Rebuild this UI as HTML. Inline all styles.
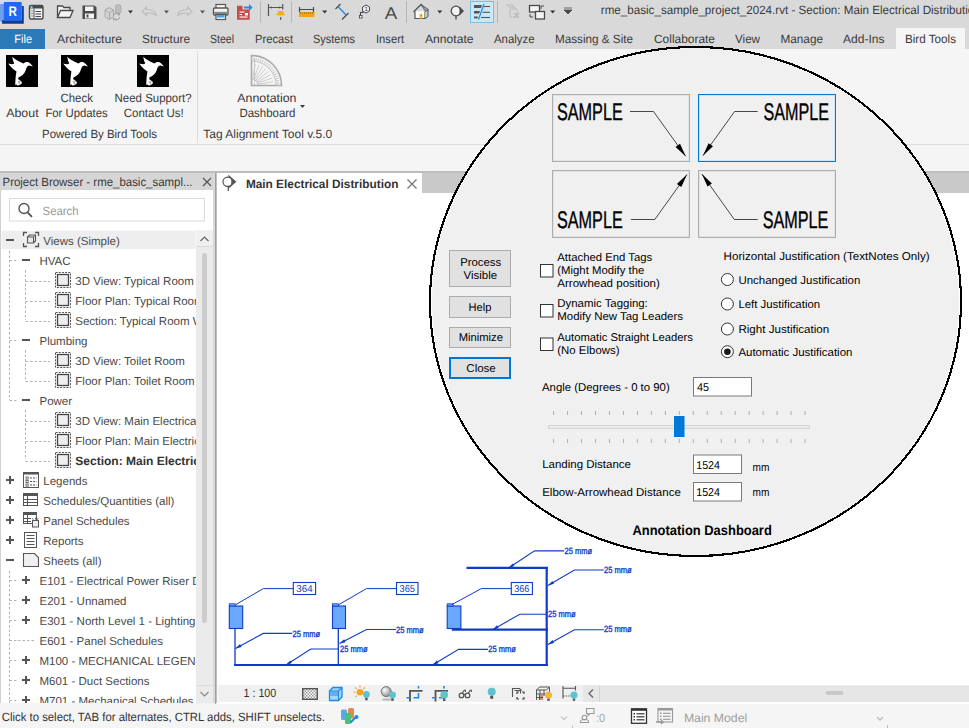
<!DOCTYPE html>
<html><head><meta charset="utf-8"><style>
html,body{margin:0;padding:0;width:969px;height:728px;overflow:hidden;background:#f5f5f5}
svg{display:block;font-family:"Liberation Sans", sans-serif}
</style></head><body>
<svg width="969" height="728" viewBox="0 0 969 728" text-rendering="geometricPrecision">
<rect x="0" y="0" width="969" height="728" fill="#f5f5f5" />
<rect x="0" y="0" width="969" height="49" fill="#d9d9d9" />
<rect x="0" y="29" width="45" height="20" fill="#2b79b9" />
<text x="14.3" y="43" font-size="12" fill="#ffffff" font-weight="normal" text-anchor="start" textLength="17.8" lengthAdjust="spacingAndGlyphs" >File</text>
<rect x="896" y="28" width="69" height="21" fill="#f5f5f5" />
<text x="57" y="43" font-size="12" fill="#3a3a3a" textLength="65" lengthAdjust="spacingAndGlyphs">Architecture</text>
<text x="142" y="43" font-size="12" fill="#3a3a3a" textLength="48" lengthAdjust="spacingAndGlyphs">Structure</text>
<text x="210" y="43" font-size="12" fill="#3a3a3a" textLength="24" lengthAdjust="spacingAndGlyphs">Steel</text>
<text x="255" y="43" font-size="12" fill="#3a3a3a" textLength="38" lengthAdjust="spacingAndGlyphs">Precast</text>
<text x="313" y="43" font-size="12" fill="#3a3a3a" textLength="42" lengthAdjust="spacingAndGlyphs">Systems</text>
<text x="376" y="43" font-size="12" fill="#3a3a3a" textLength="28" lengthAdjust="spacingAndGlyphs">Insert</text>
<text x="425" y="43" font-size="12" fill="#3a3a3a" textLength="48.5" lengthAdjust="spacingAndGlyphs">Annotate</text>
<text x="494" y="43" font-size="12" fill="#3a3a3a" textLength="40.5" lengthAdjust="spacingAndGlyphs">Analyze</text>
<text x="555" y="43" font-size="12" fill="#3a3a3a" textLength="78" lengthAdjust="spacingAndGlyphs">Massing &amp; Site</text>
<text x="654" y="43" font-size="12" fill="#3a3a3a" textLength="61" lengthAdjust="spacingAndGlyphs">Collaborate</text>
<text x="735" y="43" font-size="12" fill="#3a3a3a" textLength="25" lengthAdjust="spacingAndGlyphs">View</text>
<text x="780.5" y="43" font-size="12" fill="#3a3a3a" textLength="42.5" lengthAdjust="spacingAndGlyphs">Manage</text>
<text x="843" y="43" font-size="12" fill="#3a3a3a" textLength="41.5" lengthAdjust="spacingAndGlyphs">Add-Ins</text>
<text x="905" y="43" font-size="12" fill="#3a3a3a" textLength="51" lengthAdjust="spacingAndGlyphs">Bird Tools</text>
<line x1="0" y1="144.5" x2="969" y2="144.5" stroke="#dcdcdc" stroke-width="1" />
<line x1="197.5" y1="51" x2="197.5" y2="143" stroke="#dedede" stroke-width="1" />
<text x="6.2" y="116.7" font-size="12" fill="#3a3a3a" font-weight="normal" text-anchor="start" textLength="32.4" lengthAdjust="spacingAndGlyphs" >About</text>
<text x="60.5" y="102" font-size="12" fill="#3a3a3a" font-weight="normal" text-anchor="start" textLength="32.4" lengthAdjust="spacingAndGlyphs" >Check</text>
<text x="45.4" y="116.7" font-size="12" fill="#3a3a3a" font-weight="normal" text-anchor="start" textLength="62.3" lengthAdjust="spacingAndGlyphs" >For Updates</text>
<text x="114.6" y="102" font-size="12" fill="#3a3a3a" font-weight="normal" text-anchor="start" textLength="77" lengthAdjust="spacingAndGlyphs" >Need Support?</text>
<text x="123.8" y="116.7" font-size="12" fill="#3a3a3a" font-weight="normal" text-anchor="start" textLength="60" lengthAdjust="spacingAndGlyphs" >Contact Us!</text>
<text x="42" y="138.2" font-size="12" fill="#3a3a3a" font-weight="normal" text-anchor="start" textLength="115" lengthAdjust="spacingAndGlyphs" >Powered By Bird Tools</text>
<text x="237.3" y="102" font-size="12" fill="#3a3a3a" font-weight="normal" text-anchor="start" textLength="59.2" lengthAdjust="spacingAndGlyphs" >Annotation</text>
<text x="239.4" y="116.7" font-size="12" fill="#3a3a3a" font-weight="normal" text-anchor="start" textLength="56.1" lengthAdjust="spacingAndGlyphs" >Dashboard</text>
<path d="M300,105 h5 l-2.5,3 z" fill="#3a3a3a" />
<text x="203.3" y="138.2" font-size="12" fill="#3a3a3a" font-weight="normal" text-anchor="start" textLength="129" lengthAdjust="spacingAndGlyphs" >Tag Alignment Tool v.5.0</text>
<text x="600.8" y="13.6" font-size="12" fill="#3a3a3a" font-weight="normal" text-anchor="start" textLength="380" lengthAdjust="spacingAndGlyphs" >rme_basic_sample_project_2024.rvt - Section: Main Electrical Distribution</text>
<rect x="6" y="55" width="32" height="32" fill="#000" />
<g transform="translate(6,55)"><path d="M6.2,1.7 C8,3.5 12,6 17.5,8.5 C19,6.5 22,6.3 24,8.3 L27,11.6 L23.2,10.6 C21,11 20.2,13 19.6,15.5 C18.6,19 15.5,21 12.6,22.2 L11.8,26 L10.4,30.2 L9.2,29.5 L9.6,22.6 C9.9,19.5 10.3,17.8 10.5,16.5 C7,14.2 4,11.2 2.2,8.4 C4.5,9.2 6.8,9.6 8.2,8.6 C7.2,6.5 6.5,4.2 6.2,1.7 Z" fill="#fff"/><path d="M11,24.5 c2,0 4,1.5 4.6,3.5 c-1,1.5 -3,2.2 -4.6,2" fill="#fff" stroke="#fff" stroke-width="0.8"/><path d="M12,26 l1.5,3 M14,25.8 l-0.5,2.5" stroke="#666" stroke-width="0.6"/></g>
<rect x="61" y="55" width="32" height="32" fill="#000" />
<g transform="translate(61,55)"><path d="M6.2,1.7 C8,3.5 12,6 17.5,8.5 C19,6.5 22,6.3 24,8.3 L27,11.6 L23.2,10.6 C21,11 20.2,13 19.6,15.5 C18.6,19 15.5,21 12.6,22.2 L11.8,26 L10.4,30.2 L9.2,29.5 L9.6,22.6 C9.9,19.5 10.3,17.8 10.5,16.5 C7,14.2 4,11.2 2.2,8.4 C4.5,9.2 6.8,9.6 8.2,8.6 C7.2,6.5 6.5,4.2 6.2,1.7 Z" fill="#fff"/><path d="M11,24.5 c2,0 4,1.5 4.6,3.5 c-1,1.5 -3,2.2 -4.6,2" fill="#fff" stroke="#fff" stroke-width="0.8"/><path d="M12,26 l1.5,3 M14,25.8 l-0.5,2.5" stroke="#666" stroke-width="0.6"/></g>
<rect x="137" y="55" width="32" height="32" fill="#000" />
<g transform="translate(137,55)"><path d="M6.2,1.7 C8,3.5 12,6 17.5,8.5 C19,6.5 22,6.3 24,8.3 L27,11.6 L23.2,10.6 C21,11 20.2,13 19.6,15.5 C18.6,19 15.5,21 12.6,22.2 L11.8,26 L10.4,30.2 L9.2,29.5 L9.6,22.6 C9.9,19.5 10.3,17.8 10.5,16.5 C7,14.2 4,11.2 2.2,8.4 C4.5,9.2 6.8,9.6 8.2,8.6 C7.2,6.5 6.5,4.2 6.2,1.7 Z" fill="#fff"/><path d="M11,24.5 c2,0 4,1.5 4.6,3.5 c-1,1.5 -3,2.2 -4.6,2" fill="#fff" stroke="#fff" stroke-width="0.8"/><path d="M12,26 l1.5,3 M14,25.8 l-0.5,2.5" stroke="#666" stroke-width="0.6"/></g>
<g fill="none" stroke="#ababab">
<path d="M251.5,85.5 V55.5 A30,30 0 0 1 281.5,85.5 Z" fill="none" stroke="#a9a9a9" stroke-width="1.6" />
<path d="M251.5,61 A24.5,24.5 0 0 1 276,85.5" fill="none" stroke="#c4c4c4" stroke-width="1" />
<path d="M251.5,79 A6.5,6.5 0 0 1 258,85.5" fill="none" stroke="#bbbbbb" stroke-width="1" />
<line x1="252.7" y1="78.6" x2="255.3" y2="63.8" stroke="#c0c0c0" stroke-width="0.8" />
<line x1="253.9" y1="78.9" x2="259.0" y2="64.8" stroke="#c0c0c0" stroke-width="0.8" />
<line x1="255.0" y1="79.4" x2="262.5" y2="66.4" stroke="#c0c0c0" stroke-width="0.8" />
<line x1="256.0" y1="80.1" x2="265.6" y2="68.6" stroke="#c0c0c0" stroke-width="0.8" />
<line x1="256.9" y1="81.0" x2="268.4" y2="71.4" stroke="#c0c0c0" stroke-width="0.8" />
<line x1="257.6" y1="82.0" x2="270.6" y2="74.5" stroke="#c0c0c0" stroke-width="0.8" />
<line x1="258.1" y1="83.1" x2="272.2" y2="78.0" stroke="#c0c0c0" stroke-width="0.8" />
<line x1="258.4" y1="84.3" x2="273.2" y2="81.7" stroke="#c0c0c0" stroke-width="0.8" />
<line x1="251.5" y1="60.5" x2="251.5" y2="57.5" stroke="#b8b8b8" stroke-width="0.8" />
<line x1="253.7" y1="60.6" x2="253.9" y2="57.6" stroke="#b8b8b8" stroke-width="0.8" />
<line x1="255.8" y1="60.9" x2="256.4" y2="57.9" stroke="#b8b8b8" stroke-width="0.8" />
<line x1="258.0" y1="61.4" x2="258.7" y2="58.5" stroke="#b8b8b8" stroke-width="0.8" />
<line x1="260.1" y1="62.0" x2="261.1" y2="59.2" stroke="#b8b8b8" stroke-width="0.8" />
<line x1="262.1" y1="62.8" x2="263.3" y2="60.1" stroke="#b8b8b8" stroke-width="0.8" />
<line x1="264.0" y1="63.8" x2="265.5" y2="61.3" stroke="#b8b8b8" stroke-width="0.8" />
<line x1="265.8" y1="65.0" x2="267.6" y2="62.6" stroke="#b8b8b8" stroke-width="0.8" />
<line x1="267.6" y1="66.3" x2="269.5" y2="64.1" stroke="#b8b8b8" stroke-width="0.8" />
<line x1="269.2" y1="67.8" x2="271.3" y2="65.7" stroke="#b8b8b8" stroke-width="0.8" />
<line x1="270.7" y1="69.4" x2="272.9" y2="67.5" stroke="#b8b8b8" stroke-width="0.8" />
<line x1="272.0" y1="71.2" x2="274.4" y2="69.4" stroke="#b8b8b8" stroke-width="0.8" />
<line x1="273.2" y1="73.0" x2="275.7" y2="71.5" stroke="#b8b8b8" stroke-width="0.8" />
<line x1="274.2" y1="74.9" x2="276.9" y2="73.7" stroke="#b8b8b8" stroke-width="0.8" />
<line x1="275.0" y1="76.9" x2="277.8" y2="75.9" stroke="#b8b8b8" stroke-width="0.8" />
<line x1="275.6" y1="79.0" x2="278.5" y2="78.3" stroke="#b8b8b8" stroke-width="0.8" />
<line x1="276.1" y1="81.2" x2="279.1" y2="80.6" stroke="#b8b8b8" stroke-width="0.8" />
<line x1="276.4" y1="83.3" x2="279.4" y2="83.1" stroke="#b8b8b8" stroke-width="0.8" />
<line x1="276.5" y1="85.5" x2="279.5" y2="85.5" stroke="#b8b8b8" stroke-width="0.8" />
<line x1="254.5" y1="58" x2="254.5" y2="85.5" stroke="#c4c4c4" stroke-width="0.8" />
</g>
<path d="M0,4 h4 v17.5 h-4 z" fill="#6f9fe8" />
<path d="M2,20.2 h19.7 V6 h2.1 v17.8 H2 z" fill="#0b3d9e" />
<rect x="3.8" y="2.1" width="17.9" height="18.1" fill="#1f6af5" rx="0.8"/>
<text x="8.6" y="15.8" font-size="14" fill="#ffffff" font-weight="bold" text-anchor="start" textLength="8.4" lengthAdjust="spacingAndGlyphs" >R</text>
<rect x="29.5" y="5.5" width="13.5" height="13.5" fill="#f2f2f2" stroke="#4a4a4a" stroke-width="1.4" rx="1.5"/>
<rect x="29.5" y="5.5" width="13.5" height="3" fill="#4a4a4a" />
<rect x="30.5" y="6" width="2" height="2" fill="#7fc8ff" />
<line x1="34" y1="8.5" x2="34" y2="19" stroke="#4a4a4a" stroke-width="1" />
<line x1="31" y1="11" x2="33" y2="11" stroke="#888" stroke-width="1" />
<line x1="31" y1="13.5" x2="33" y2="13.5" stroke="#888" stroke-width="1" />
<line x1="31" y1="16" x2="33" y2="16" stroke="#888" stroke-width="1" />
<line x1="35.5" y1="11.5" x2="41" y2="11.5" stroke="#4a4a4a" stroke-width="1" />
<line x1="35.5" y1="14" x2="41" y2="14" stroke="#4a4a4a" stroke-width="1" />
<line x1="35.5" y1="16.5" x2="41" y2="16.5" stroke="#4a4a4a" stroke-width="1" />
<path d="M57.5,17.5 V6 h5 l1.5,1.5 h6 v3 M57.5,17.5 L60.5,10.5 H73 L70,17.5 Z" fill="#f4f4f4" stroke="#4a4a4a" stroke-width="1.3" />
<path d="M82.5,5.5 h12 l2,2 v11.5 h-14 z" fill="#4a4a4a" />
<rect x="85" y="6.5" width="8.5" height="4.5" fill="#f2f2f2" />
<rect x="85" y="13.5" width="9" height="5" fill="#f2f2f2" />
<rect x="86.5" y="14.5" width="2" height="3" fill="#4a4a4a" />
<path d="M105,10 l4,-2.5 l4.5,2.5 v7 l-4.5,2.5 l-4,-2.5 z M105,10 l4.5,2.5 l4,-2.5 M109.5,12.5 v7" fill="#d0d0d0" stroke="#a9a9a9" stroke-width="1" />
<path d="M115.5,5.5 q2.8,-2 5.5,0 v7 q-2.8,2 -5.5,0 z" fill="#bcbcbc" stroke="#a9a9a9" stroke-width="0.8" />
<path d="M113.5,16 a3,3 0 0 1 5.5,-1.5 M119.5,17 a3,3 0 0 1 -5.5,1.5" fill="none" stroke="#a0a0a0" stroke-width="1.1" />
<path d="M119.5,13 v2 h-2 M113.5,20.5 v-2 h2" fill="none" stroke="#a0a0a0" stroke-width="1" />
<path d="M128.0,10.5 h5 l-2.5,3 z" fill="#333" />
<path d="M164.0,10.5 h5 l-2.5,3 z" fill="#555" />
<path d="M200.0,10.5 h5 l-2.5,3 z" fill="#555" />
<path d="M142,11.5 L146.5,7 V9.5 C151,9.5 156,10.5 156.5,16 C154.5,13 151,13 146.5,13 V15.5 Z" fill="none" stroke="#bdbdbd" stroke-width="1.1" />
<path d="M192,11.5 L187.5,7 V9.5 C183,9.5 178,10.5 177.5,16 C179.5,13 183,13 187.5,13 V15.5 Z" fill="none" stroke="#bdbdbd" stroke-width="1.1" />
<rect x="216" y="4.5" width="9.5" height="5" fill="#f8f8f8" stroke="#555" stroke-width="1.2" />
<rect x="213.5" y="8" width="14.5" height="7" fill="#f4f4f4" stroke="#555" stroke-width="1.3" rx="1"/>
<rect x="214.2" y="11.8" width="13.1" height="2.6" fill="#8a8a8a" />
<rect x="216" y="14.5" width="9.5" height="5" fill="#ffffff" stroke="#555" stroke-width="1.2" />
<rect x="217" y="15" width="7.5" height="2.6" fill="#4aa3e6" />
<path d="M237,5.8 h5.5 v3.7 h7.2 v10.3 h-12.7 z" fill="#c84b4b" />
<rect x="239.5" y="11.5" width="5" height="1.1" fill="#fff" />
<rect x="239.5" y="14" width="2.5" height="1.1" fill="#fff" />
<rect x="239.5" y="16.5" width="8" height="1.1" fill="#fff" />
<rect x="245" y="13" width="3" height="2.5" fill="#fff" />
<path d="M244,6.5 h5 v-2.5 l3.6,3.5 l-3.6,3.5 v-2.5 h-5 z" fill="#2a8ae0" />
<line x1="260.5" y1="1.5" x2="260.5" y2="22.5" stroke="#b5b5b5" stroke-width="1" />
<line x1="291.5" y1="1.5" x2="291.5" y2="22.5" stroke="#b5b5b5" stroke-width="1" />
<path d="M268.5,4 v12 M282.7,4 v5.5 M268.5,7.5 h14.2" fill="none" stroke="#555" stroke-width="1.2" />
<path d="M270,7.5 l2,-1.3 v2.6 z M281.2,7.5 l-2,-1.3 v2.6 z" fill="#555" />
<path d="M277.5,11 h6.5 l-1.3,2.5 h2 v1.8 h-8 v-1.8 h2 z" fill="#f6a81e" />
<line x1="280.7" y1="17" x2="280.7" y2="20" stroke="#555" stroke-width="1.2" />
<path d="M299.5,7 v5 M313.5,7 v5 M299.5,9.5 h14" fill="none" stroke="#4a4a4a" stroke-width="1.2" />
<rect x="299" y="12" width="15.5" height="5" fill="#f4a21a" />
<line x1="300.5" y1="12" x2="300.5" y2="14" stroke="#b06d00" stroke-width="0.7" />
<line x1="302.5" y1="12" x2="302.5" y2="14" stroke="#b06d00" stroke-width="0.7" />
<line x1="304.5" y1="12" x2="304.5" y2="14" stroke="#b06d00" stroke-width="0.7" />
<line x1="306.5" y1="12" x2="306.5" y2="14" stroke="#b06d00" stroke-width="0.7" />
<line x1="308.5" y1="12" x2="308.5" y2="14" stroke="#b06d00" stroke-width="0.7" />
<line x1="310.5" y1="12" x2="310.5" y2="14" stroke="#b06d00" stroke-width="0.7" />
<line x1="312.5" y1="12" x2="312.5" y2="14" stroke="#b06d00" stroke-width="0.7" />
<path d="M322.2,10.5 h5 l-2.5,3 z" fill="#333" />
<path d="M335.5,9 l5,-5 M342,19.5 l6.5,-6.5" fill="none" stroke="#4a4a4a" stroke-width="1.2" />
<line x1="338.5" y1="7" x2="346" y2="15" stroke="#1e88e5" stroke-width="1.3" />
<path d="M360.5,17.5 v-5 h2.5 v-3" fill="none" stroke="#4a4a4a" stroke-width="1.1" />
<rect x="359.5" y="15.5" width="2.5" height="2.5" fill="#fff" stroke="#4a4a4a" stroke-width="0.9" />
<path d="M366,5 l3.5,2 v4 l-3.5,2 l-3.5,-2 v-4 z" fill="#f0f0f0" stroke="#4a4a4a" stroke-width="1" />
<text x="364.5" y="11.3" font-size="6" fill="#333" font-weight="normal" text-anchor="start" >1</text>
<text x="384.8" y="19" font-size="17" fill="#4a4a4a" font-weight="normal" text-anchor="start" textLength="12.5" lengthAdjust="spacingAndGlyphs" >A</text>
<line x1="406.5" y1="1.5" x2="406.5" y2="22.5" stroke="#b5b5b5" stroke-width="1" />
<path d="M415,11.5 V18.5 H425 V11.5" fill="#ffffff" stroke="#555" stroke-width="1.2" />
<path d="M425,11.5 l3,-2 V16.5 l-3,2" fill="#c8c8c8" stroke="#555" stroke-width="1" />
<path d="M413.5,12 L421,4.5 L425.5,9" fill="none" stroke="#555" stroke-width="1.3" />
<path d="M421,4.5 l7.5,5 l-3,2 l-4.5,-7" fill="#9a9a9a" stroke="#555" stroke-width="0.8" />
<rect x="419.5" y="13.5" width="2.8" height="5" fill="#f2c230" />
<rect x="420.8" y="15" width="0.8" height="1" fill="#555" />
<path d="M437.3,10.5 h5 l-2.5,3 z" fill="#333" />
<circle cx="456" cy="11" r="4.8" fill="#f2f2f2" stroke="#4a4a4a" stroke-width="1.3"/>
<path d="M459.5,6.5 L464,11 L459.5,15.5 Z" fill="#4a4a4a" />
<line x1="456" y1="16" x2="456" y2="19.5" stroke="#4a4a4a" stroke-width="1.3" />
<rect x="470.5" y="1.5" width="23" height="21" fill="#cce8f7" stroke="#79c1ea" stroke-width="1" />
<path d="M474,5 h8 l-1,3 h-7 z M474,11 h6 l-0.8,2.5 h-5.2 z M474,16.5 h4 l-0.6,2 h-3.4 z" fill="#555" />
<line x1="484" y1="6.5" x2="490" y2="6.5" stroke="#555" stroke-width="1.1" />
<line x1="482.5" y1="12.3" x2="490" y2="12.3" stroke="#555" stroke-width="1.1" />
<line x1="481" y1="17.5" x2="490" y2="17.5" stroke="#555" stroke-width="1.1" />
<line x1="478.5" y1="19.5" x2="484" y2="4" stroke="#1e88e5" stroke-width="1.2" />
<line x1="497.5" y1="1.5" x2="497.5" y2="22.5" stroke="#b5b5b5" stroke-width="1" />
<path d="M506,5 h7 v2 M508,7 h7 v2 M510,9 h7 v8 h-7 z" fill="none" stroke="#bcbcbc" stroke-width="1" />
<path d="M514,13 l5,5 M519,13 l-5,5" fill="none" stroke="#bcbcbc" stroke-width="1.6" />
<rect x="529.5" y="5.5" width="10" height="6.5" fill="#f4f4f4" stroke="#4a4a4a" stroke-width="1.3" />
<rect x="535.5" y="11.5" width="9" height="7.5" fill="#f4f4f4" stroke="#4a4a4a" stroke-width="1.3" />
<path d="M541,9 v-3 h3 M530,14 v3 h3" fill="none" stroke="#4a4a4a" stroke-width="1" />
<path d="M550.2,10.5 h5 l-2.5,3 z" fill="#333" />
<path d="M564,8 h8 M564,10 h8 l-4,4 z" fill="#4a4a4a" stroke="#4a4a4a" stroke-width="0.8" />
<rect x="0" y="171" width="969" height="2" fill="#bdbdbd" />
<rect x="0" y="173" width="215" height="17" fill="#d6d6d6" />
<text x="2.5" y="185.6" font-size="12" fill="#3a3a3a" font-weight="normal" text-anchor="start" textLength="190" lengthAdjust="spacingAndGlyphs" >Project Browser - rme_basic_sampl...</text>
<path d="M203,178 L211,186 M211,178 L203,186" fill="none" stroke="#555" stroke-width="1.2" />
<rect x="0" y="190" width="213" height="514" fill="#ffffff" />
<line x1="0.5" y1="190" x2="0.5" y2="704" stroke="#d0d0d0" stroke-width="1" />
<rect x="213" y="173" width="4" height="531" fill="#d9d9d9" />
<line x1="216" y1="173" x2="216" y2="704" stroke="#a8a8a8" stroke-width="1" />
<rect x="217" y="173" width="752" height="20" fill="#c9c9c9" />
<rect x="217" y="173" width="205" height="20" fill="#ffffff" />
<rect x="217" y="193" width="752" height="492" fill="#ffffff" />
<rect x="219" y="685" width="381" height="17" fill="#f0f0f0" />
<rect x="600" y="685.5" width="369" height="16.5" fill="#e6e6e6" />
<rect x="825.5" y="691" width="18" height="4" fill="#c8c8c8" rx="2"/>
<rect x="0" y="703" width="969" height="25" fill="#f5f5f5" />
<rect x="217" y="702" width="752" height="2" fill="#ffffff" />
<circle cx="227.6" cy="181.8" r="4.6" fill="#fff" stroke="#555" stroke-width="1.2"/>
<path d="M228.3,175.5 L235.5,181.8 L228.3,188" fill="none" stroke="#555" stroke-width="1.2" />
<path d="M231.5,178.8 L235.5,181.8 L231.5,184.8 Z" fill="#555" />
<line x1="228.3" y1="186" x2="228.3" y2="191" stroke="#555" stroke-width="1.3" />
<text x="245.9" y="187.7" font-size="12" fill="#333" font-weight="bold" text-anchor="start" textLength="152.5" lengthAdjust="spacingAndGlyphs" >Main Electrical Distribution</text>
<path d="M407.5,179.5 L416.5,188.5 M416.5,179.5 L407.5,188.5" fill="none" stroke="#777" stroke-width="1.3" />
<line x1="215.5" y1="173" x2="215.5" y2="704" stroke="#a0a0a0" stroke-width="1" />
<rect x="9.5" y="198.5" width="195" height="22.5" fill="#ffffff" stroke="#dcdcdc" stroke-width="1" />
<text x="42.6" y="214.5" font-size="12" fill="#9a9a9a" font-weight="normal" text-anchor="start" textLength="36" lengthAdjust="spacingAndGlyphs" >Search</text>
<circle cx="24" cy="208.5" r="5" fill="none" stroke="#555" stroke-width="1.4"/>
<line x1="27.6" y1="212.3" x2="32" y2="216.8" stroke="#555" stroke-width="1.8" />
<rect x="1.5" y="230.7" width="194" height="18.3" fill="#eeeeee" />
<rect x="196" y="230.5" width="17" height="473" fill="#ebebeb" />
<rect x="196" y="230.5" width="17" height="16" fill="#f0f0f0" />
<path d="M200.5,241 L204.5,237 L208.5,241" fill="none" stroke="#666" stroke-width="1.2" />
<line x1="196" y1="246.5" x2="213" y2="246.5" stroke="#dcdcdc" stroke-width="1" />
<line x1="196" y1="685.5" x2="213" y2="685.5" stroke="#dcdcdc" stroke-width="1" />
<rect x="202" y="253" width="5" height="370" fill="#cdcdcd" rx="2.5"/>
<path d="M200.5,692 L204.5,696 L208.5,692" fill="none" stroke="#888" stroke-width="1.2" />
<svg x="0" y="190" width="196" height="513" overflow="hidden"><g transform="translate(0,-190)">
<line x1="9.5" y1="251" x2="9.5" y2="400" stroke="#b4b4b4" stroke-width="1" stroke-dasharray="2.5,2"/>
<line x1="25.5" y1="270" x2="25.5" y2="320" stroke="#b4b4b4" stroke-width="1" stroke-dasharray="2.5,2"/>
<line x1="25.5" y1="350" x2="25.5" y2="380" stroke="#b4b4b4" stroke-width="1" stroke-dasharray="2.5,2"/>
<line x1="25.5" y1="410" x2="25.5" y2="460" stroke="#b4b4b4" stroke-width="1" stroke-dasharray="2.5,2"/>
<line x1="9.5" y1="571" x2="9.5" y2="710" stroke="#b4b4b4" stroke-width="1" stroke-dasharray="2.5,2"/>
<rect x="6" y="239" width="8" height="2" fill="#555" />
<path d="M23.5,236 v-3.5 h3.5 M35,232.5 h3.5 v3.5 M38.5,243 v3.5 h-3.5 M27,246.5 h-3.5 v-3.5" fill="none" stroke="#555" stroke-width="1.3" />
<path d="M27.5,237 l2,-2 h6 v6 l-2,2 h-6 z" fill="#e8e8e8" stroke="#555" stroke-width="1.1" />
<path d="M27.5,237 h6 v6 M33.5,237 l2,-2" fill="none" stroke="#555" stroke-width="1" />
<text x="43.3" y="244.7" font-size="11.5" fill="#4a4a4a" font-weight="normal" text-anchor="start" >Views (Simple)</text>
<line x1="9.5" y1="260.5" x2="18" y2="260.5" stroke="#b4b4b4" stroke-width="1" stroke-dasharray="2.5,2"/>
<rect x="22" y="259" width="8" height="2" fill="#555" />
<text x="39.5" y="264.7" font-size="11.5" fill="#4a4a4a" font-weight="normal" text-anchor="start" >HVAC</text>
<line x1="25.5" y1="281.5" x2="50" y2="281.5" stroke="#b4b4b4" stroke-width="1" stroke-dasharray="2.5,2"/>
<rect x="55.5" y="272.5" width="15" height="15" fill="none" stroke="#555" stroke-width="1" stroke-dasharray="2,1.2"/>
<rect x="57.5" y="274.5" width="11" height="11" fill="#eeeeee" stroke="#444" stroke-width="1.3" />
<text x="75.3" y="284.7" font-size="11.5" fill="#4a4a4a" font-weight="normal" text-anchor="start" >3D View: Typical Room</text>
<line x1="25.5" y1="301.5" x2="50" y2="301.5" stroke="#b4b4b4" stroke-width="1" stroke-dasharray="2.5,2"/>
<rect x="55.5" y="292.5" width="15" height="15" fill="none" stroke="#555" stroke-width="1" stroke-dasharray="2,1.2"/>
<rect x="57.5" y="294.5" width="11" height="11" fill="#eeeeee" stroke="#444" stroke-width="1.3" />
<text x="75.3" y="304.7" font-size="11.5" fill="#4a4a4a" font-weight="normal" text-anchor="start" >Floor Plan: Typical Room</text>
<line x1="25.5" y1="321.5" x2="50" y2="321.5" stroke="#b4b4b4" stroke-width="1" stroke-dasharray="2.5,2"/>
<rect x="55.5" y="312.5" width="15" height="15" fill="none" stroke="#555" stroke-width="1" stroke-dasharray="2,1.2"/>
<rect x="57.5" y="314.5" width="11" height="11" fill="#eeeeee" stroke="#444" stroke-width="1.3" />
<text x="75.3" y="324.7" font-size="11.5" fill="#4a4a4a" font-weight="normal" text-anchor="start" >Section: Typical Room Wall</text>
<line x1="9.5" y1="340.5" x2="18" y2="340.5" stroke="#b4b4b4" stroke-width="1" stroke-dasharray="2.5,2"/>
<rect x="22" y="339" width="8" height="2" fill="#555" />
<text x="39.5" y="344.7" font-size="11.5" fill="#4a4a4a" font-weight="normal" text-anchor="start" >Plumbing</text>
<line x1="25.5" y1="361.5" x2="50" y2="361.5" stroke="#b4b4b4" stroke-width="1" stroke-dasharray="2.5,2"/>
<rect x="55.5" y="352.5" width="15" height="15" fill="none" stroke="#555" stroke-width="1" stroke-dasharray="2,1.2"/>
<rect x="57.5" y="354.5" width="11" height="11" fill="#eeeeee" stroke="#444" stroke-width="1.3" />
<text x="75.3" y="364.7" font-size="11.5" fill="#4a4a4a" font-weight="normal" text-anchor="start" >3D View: Toilet Room</text>
<line x1="25.5" y1="381.5" x2="50" y2="381.5" stroke="#b4b4b4" stroke-width="1" stroke-dasharray="2.5,2"/>
<rect x="55.5" y="372.5" width="15" height="15" fill="none" stroke="#555" stroke-width="1" stroke-dasharray="2,1.2"/>
<rect x="57.5" y="374.5" width="11" height="11" fill="#eeeeee" stroke="#444" stroke-width="1.3" />
<text x="75.3" y="384.7" font-size="11.5" fill="#4a4a4a" font-weight="normal" text-anchor="start" >Floor Plan: Toilet Room</text>
<line x1="9.5" y1="400.5" x2="18" y2="400.5" stroke="#b4b4b4" stroke-width="1" stroke-dasharray="2.5,2"/>
<rect x="22" y="399" width="8" height="2" fill="#555" />
<text x="39.5" y="404.7" font-size="11.5" fill="#4a4a4a" font-weight="normal" text-anchor="start" >Power</text>
<line x1="25.5" y1="421.5" x2="50" y2="421.5" stroke="#b4b4b4" stroke-width="1" stroke-dasharray="2.5,2"/>
<rect x="55.5" y="412.5" width="15" height="15" fill="none" stroke="#555" stroke-width="1" stroke-dasharray="2,1.2"/>
<rect x="57.5" y="414.5" width="11" height="11" fill="#eeeeee" stroke="#444" stroke-width="1.3" />
<text x="75.3" y="424.7" font-size="11.5" fill="#4a4a4a" font-weight="normal" text-anchor="start" >3D View: Main Electrical Room</text>
<line x1="25.5" y1="441.5" x2="50" y2="441.5" stroke="#b4b4b4" stroke-width="1" stroke-dasharray="2.5,2"/>
<rect x="55.5" y="432.5" width="15" height="15" fill="none" stroke="#555" stroke-width="1" stroke-dasharray="2,1.2"/>
<rect x="57.5" y="434.5" width="11" height="11" fill="#eeeeee" stroke="#444" stroke-width="1.3" />
<text x="75.3" y="444.7" font-size="11.5" fill="#4a4a4a" font-weight="normal" text-anchor="start" >Floor Plan: Main Electrical Room</text>
<line x1="25.5" y1="461.5" x2="50" y2="461.5" stroke="#b4b4b4" stroke-width="1" stroke-dasharray="2.5,2"/>
<rect x="55.5" y="452.5" width="15" height="15" fill="none" stroke="#555" stroke-width="1" stroke-dasharray="2,1.2"/>
<rect x="57.5" y="454.5" width="11" height="11" fill="#eeeeee" stroke="#444" stroke-width="1.3" />
<text x="75.3" y="464.7" font-size="12" fill="#333" font-weight="bold" text-anchor="start" >Section: Main Electrical Distribution</text>
<rect x="6" y="479" width="8" height="2" fill="#555" />
<rect x="9" y="476" width="2" height="8" fill="#555" />
<rect x="23.5" y="472.5" width="15" height="15" fill="#fff" stroke="#555" stroke-width="1" />
<rect x="23.5" y="472.5" width="15" height="2" fill="#555" />
<rect x="26" y="477.0" width="2.2" height="2.2" fill="none" stroke="#555" stroke-width="0.8" />
<line x1="30" y1="478.0" x2="36.5" y2="478.0" stroke="#555" stroke-width="1" stroke-dasharray="2,1"/>
<rect x="26" y="480.5" width="2.2" height="2.2" fill="none" stroke="#555" stroke-width="0.8" />
<line x1="30" y1="481.5" x2="36.5" y2="481.5" stroke="#555" stroke-width="1" stroke-dasharray="2,1"/>
<rect x="26" y="484.0" width="2.2" height="2.2" fill="none" stroke="#555" stroke-width="0.8" />
<line x1="30" y1="485.0" x2="36.5" y2="485.0" stroke="#555" stroke-width="1" stroke-dasharray="2,1"/>
<text x="43.3" y="484.7" font-size="11.5" fill="#4a4a4a" font-weight="normal" text-anchor="start" >Legends</text>
<rect x="6" y="499" width="8" height="2" fill="#555" />
<rect x="9" y="496" width="2" height="8" fill="#555" />
<rect x="23.5" y="493.5" width="14" height="12" fill="#fff" stroke="#555" stroke-width="1" />
<rect x="23.5" y="493.5" width="14" height="2.5" fill="#555" />
<line x1="23.5" y1="499.5" x2="37.5" y2="499.5" stroke="#555" stroke-width="1" />
<line x1="23.5" y1="502.5" x2="37.5" y2="502.5" stroke="#555" stroke-width="1" />
<line x1="27.5" y1="496" x2="27.5" y2="505.5" stroke="#555" stroke-width="1" />
<text x="43.3" y="504.7" font-size="11.5" fill="#4a4a4a" font-weight="normal" text-anchor="start" >Schedules/Quantities (all)</text>
<rect x="6" y="519" width="8" height="2" fill="#555" />
<rect x="9" y="516" width="2" height="8" fill="#555" />
<rect x="23.5" y="512.5" width="13" height="11" fill="#fff" stroke="#555" stroke-width="1" />
<rect x="23.5" y="512.5" width="13" height="2.5" fill="#555" />
<line x1="23.5" y1="518.5" x2="31" y2="518.5" stroke="#555" stroke-width="1" />
<line x1="23.5" y1="521.5" x2="31" y2="521.5" stroke="#555" stroke-width="1" />
<line x1="27.5" y1="515" x2="27.5" y2="523.5" stroke="#555" stroke-width="1" />
<rect x="32.5" y="520.5" width="6" height="6.5" fill="#eee" stroke="#555" stroke-width="1" />
<line x1="32" y1="518" x2="33.5" y2="520" stroke="#3aa0e0" stroke-width="1" />
<line x1="35.5" y1="517.5" x2="35.5" y2="519.5" stroke="#a040e0" stroke-width="1" />
<line x1="38.5" y1="518" x2="37" y2="520" stroke="#e04060" stroke-width="1" />
<text x="43.3" y="524.7" font-size="11.5" fill="#4a4a4a" font-weight="normal" text-anchor="start" >Panel Schedules</text>
<rect x="6" y="539" width="8" height="2" fill="#555" />
<rect x="9" y="536" width="2" height="8" fill="#555" />
<rect x="24.5" y="532.5" width="12" height="15" fill="#fff" stroke="#555" stroke-width="1" />
<line x1="26.5" y1="535.5" x2="34.5" y2="535.5" stroke="#555" stroke-width="1" />
<line x1="26.5" y1="538.5" x2="34.5" y2="538.5" stroke="#555" stroke-width="1" />
<line x1="26.5" y1="541.5" x2="34.5" y2="541.5" stroke="#555" stroke-width="1" />
<line x1="26.5" y1="544.5" x2="34.5" y2="544.5" stroke="#555" stroke-width="1" />
<text x="43.3" y="544.7" font-size="11.5" fill="#4a4a4a" font-weight="normal" text-anchor="start" >Reports</text>
<rect x="6" y="559" width="8" height="2" fill="#555" />
<path d="M23.5,553.5 h11 l4,4 v9 h-15 z" fill="#f0f0f0" stroke="#555" stroke-width="1.1" />
<text x="43.3" y="564.7" font-size="11.5" fill="#4a4a4a" font-weight="normal" text-anchor="start" >Sheets (all)</text>
<line x1="9.5" y1="580.5" x2="18" y2="580.5" stroke="#b4b4b4" stroke-width="1" stroke-dasharray="2.5,2"/>
<rect x="22" y="579" width="8" height="2" fill="#555" />
<rect x="25" y="576" width="2" height="8" fill="#555" />
<text x="39.5" y="584.7" font-size="11.5" fill="#4a4a4a" font-weight="normal" text-anchor="start" >E101 - Electrical Power Riser Diagram</text>
<line x1="9.5" y1="600.5" x2="18" y2="600.5" stroke="#b4b4b4" stroke-width="1" stroke-dasharray="2.5,2"/>
<rect x="22" y="599" width="8" height="2" fill="#555" />
<rect x="25" y="596" width="2" height="8" fill="#555" />
<text x="39.5" y="604.7" font-size="11.5" fill="#4a4a4a" font-weight="normal" text-anchor="start" >E201 - Unnamed</text>
<line x1="9.5" y1="620.5" x2="18" y2="620.5" stroke="#b4b4b4" stroke-width="1" stroke-dasharray="2.5,2"/>
<rect x="22" y="619" width="8" height="2" fill="#555" />
<rect x="25" y="616" width="2" height="8" fill="#555" />
<text x="39.5" y="624.7" font-size="11.5" fill="#4a4a4a" font-weight="normal" text-anchor="start" >E301 - North Level 1 - Lighting Plan</text>
<line x1="9.5" y1="640.5" x2="18" y2="640.5" stroke="#b4b4b4" stroke-width="1" stroke-dasharray="2.5,2"/>
<line x1="18" y1="640.5" x2="34" y2="640.5" stroke="#b4b4b4" stroke-width="1" stroke-dasharray="2.5,2"/>
<text x="39.5" y="644.7" font-size="11.5" fill="#4a4a4a" font-weight="normal" text-anchor="start" >E601 - Panel Schedules</text>
<line x1="9.5" y1="660.5" x2="18" y2="660.5" stroke="#b4b4b4" stroke-width="1" stroke-dasharray="2.5,2"/>
<rect x="22" y="659" width="8" height="2" fill="#555" />
<rect x="25" y="656" width="2" height="8" fill="#555" />
<text x="39.5" y="664.7" font-size="11.5" fill="#4a4a4a" font-weight="normal" text-anchor="start" >M100 - MECHANICAL LEGEND</text>
<line x1="9.5" y1="680.5" x2="18" y2="680.5" stroke="#b4b4b4" stroke-width="1" stroke-dasharray="2.5,2"/>
<rect x="22" y="679" width="8" height="2" fill="#555" />
<rect x="25" y="676" width="2" height="8" fill="#555" />
<text x="39.5" y="684.7" font-size="11.5" fill="#4a4a4a" font-weight="normal" text-anchor="start" >M601 - Duct Sections</text>
<line x1="9.5" y1="700.5" x2="18" y2="700.5" stroke="#b4b4b4" stroke-width="1" stroke-dasharray="2.5,2"/>
<rect x="22" y="699" width="8" height="2" fill="#555" />
<rect x="25" y="696" width="2" height="8" fill="#555" />
<text x="39.5" y="704.7" font-size="11.5" fill="#4a4a4a" font-weight="normal" text-anchor="start" >M701 - Mechanical Schedules</text>
</g></svg>
<g font-family="Liberation Sans, sans-serif">
<line x1="234" y1="665" x2="548" y2="665" stroke="#0f3cc6" stroke-width="2.2" />
<line x1="546.7" y1="567" x2="546.7" y2="666" stroke="#0f3cc6" stroke-width="2.2" />
<line x1="466.5" y1="567.9" x2="548" y2="567.9" stroke="#0f3cc6" stroke-width="2.2" />
<line x1="451.8" y1="629.7" x2="548" y2="629.7" stroke="#0f3cc6" stroke-width="2.2" />
<line x1="235" y1="628" x2="235" y2="665" stroke="#0f3cc6" stroke-width="1.3" />
<line x1="338.3" y1="628" x2="338.3" y2="665" stroke="#0f3cc6" stroke-width="1.3" />
<rect x="229.3" y="606" width="13.399999999999977" height="22.5" fill="#6aa8ff" stroke="#0f3cc6" stroke-width="1.1" />
<rect x="229.3" y="603.8" width="6" height="2.2" fill="#6aa8ff" stroke="#0f3cc6" stroke-width="0.8" />
<rect x="332.5" y="606" width="13.0" height="22.5" fill="#6aa8ff" stroke="#0f3cc6" stroke-width="1.1" />
<rect x="332.5" y="603.8" width="6" height="2.2" fill="#6aa8ff" stroke="#0f3cc6" stroke-width="0.8" />
<rect x="447.2" y="606" width="13.699999999999989" height="22.5" fill="#6aa8ff" stroke="#0f3cc6" stroke-width="1.1" />
<rect x="447.2" y="603.8" width="6" height="2.2" fill="#6aa8ff" stroke="#0f3cc6" stroke-width="0.8" />
<path d="M236,604.5 L263.3,588.6 H293.3" fill="none" stroke="#0f3cc6" stroke-width="1" />
<rect x="293.3" y="582.5" width="22.3" height="12" fill="#fff" stroke="#0f3cc6" stroke-width="1.1" />
<text x="304.45" y="592" font-size="10" fill="#0f3cc6" font-weight="normal" text-anchor="middle" textLength="16.3" lengthAdjust="spacingAndGlyphs" >364</text>
<path d="M339,604.5 L366.5,588.6 H396.5" fill="none" stroke="#0f3cc6" stroke-width="1" />
<rect x="396.5" y="582.5" width="21.5" height="12" fill="#fff" stroke="#0f3cc6" stroke-width="1.1" />
<text x="407.25" y="592" font-size="10" fill="#0f3cc6" font-weight="normal" text-anchor="middle" textLength="15.5" lengthAdjust="spacingAndGlyphs" >365</text>
<path d="M452,604.5 L481.3,588.6 H511.3" fill="none" stroke="#0f3cc6" stroke-width="1" />
<rect x="511.3" y="582.5" width="21.1" height="12" fill="#fff" stroke="#0f3cc6" stroke-width="1.1" />
<text x="521.85" y="592" font-size="10" fill="#0f3cc6" font-weight="normal" text-anchor="middle" textLength="15.100000000000001" lengthAdjust="spacingAndGlyphs" >366</text>
<path d="M235.5,648.4 L263.3,633.4 H292.2" fill="none" stroke="#0f3cc6" stroke-width="1.1" />
<path d="M235.5,648.4 L241.5,647.0 L240.0,644.1 Z" fill="#0f3cc6" />
<text x="292.5" y="636.5" font-size="9" fill="#0f3cc6" font-weight="normal" text-anchor="start" textLength="27.5" lengthAdjust="spacingAndGlyphs" stroke="#1141c8" stroke-width="0.35">25 mmø</text>
<path d="M339.5,643.5 L366.5,629.5 H396" fill="none" stroke="#0f3cc6" stroke-width="1.1" />
<path d="M339.5,643.5 L345.6,642.2 L344.1,639.3 Z" fill="#0f3cc6" />
<text x="396" y="632.5" font-size="9" fill="#0f3cc6" font-weight="normal" text-anchor="start" textLength="27.5" lengthAdjust="spacingAndGlyphs" stroke="#1141c8" stroke-width="0.35">25 mmø</text>
<path d="M286,665 L310.8,649 H338.3" fill="none" stroke="#0f3cc6" stroke-width="1.1" />
<path d="M286,665 L291.9,663.1 L290.2,660.4 Z" fill="#0f3cc6" />
<text x="340" y="652" font-size="9" fill="#0f3cc6" font-weight="normal" text-anchor="start" textLength="27.5" lengthAdjust="spacingAndGlyphs" stroke="#1141c8" stroke-width="0.35">25 mmø</text>
<path d="M508.5,568 L534.6,550.9 H564.2" fill="none" stroke="#0f3cc6" stroke-width="1.1" />
<path d="M508.5,568 L514.4,566.1 L512.6,563.4 Z" fill="#0f3cc6" />
<text x="564.5" y="554" font-size="9" fill="#0f3cc6" font-weight="normal" text-anchor="start" textLength="27.5" lengthAdjust="spacingAndGlyphs" stroke="#1141c8" stroke-width="0.35">25 mmø</text>
<path d="M548,585.4 L574.4,570 H603.9" fill="none" stroke="#0f3cc6" stroke-width="1.1" />
<path d="M548,585.4 L554.0,583.8 L552.4,581.0 Z" fill="#0f3cc6" />
<text x="604" y="573" font-size="9" fill="#0f3cc6" font-weight="normal" text-anchor="start" textLength="27.5" lengthAdjust="spacingAndGlyphs" stroke="#1141c8" stroke-width="0.35">25 mmø</text>
<path d="M492.6,629.7 L519.9,614.2 H547" fill="none" stroke="#0f3cc6" stroke-width="1.1" />
<path d="M492.6,629.7 L498.6,628.1 L497.0,625.3 Z" fill="#0f3cc6" />
<text x="548" y="617" font-size="9" fill="#0f3cc6" font-weight="normal" text-anchor="start" textLength="27.5" lengthAdjust="spacingAndGlyphs" stroke="#1141c8" stroke-width="0.35">25 mmø</text>
<path d="M548,644.4 L574.4,629.7 H603.9" fill="none" stroke="#0f3cc6" stroke-width="1.1" />
<path d="M548,644.4 L554.0,642.9 L552.5,640.1 Z" fill="#0f3cc6" />
<text x="604" y="632" font-size="9" fill="#0f3cc6" font-weight="normal" text-anchor="start" textLength="27.5" lengthAdjust="spacingAndGlyphs" stroke="#1141c8" stroke-width="0.35">25 mmø</text>
<path d="M432.5,665 L458.6,649.4 H488.1" fill="none" stroke="#0f3cc6" stroke-width="1.1" />
<path d="M432.5,665 L438.5,663.3 L436.8,660.5 Z" fill="#0f3cc6" />
<text x="488.3" y="652" font-size="9" fill="#0f3cc6" font-weight="normal" text-anchor="start" textLength="27.5" lengthAdjust="spacingAndGlyphs" stroke="#1141c8" stroke-width="0.35">25 mmø</text>
</g>
<text x="243.5" y="697.3" font-size="12" fill="#333" font-weight="normal" text-anchor="start" textLength="32.8" lengthAdjust="spacingAndGlyphs" >1 : 100</text>
<defs><pattern id="chk" x="303" y="689" width="3" height="3" patternUnits="userSpaceOnUse"><rect width="3" height="3" fill="#fff"/><rect width="1.5" height="1.5" fill="#9a9a9a"/><rect x="1.5" y="1.5" width="1.5" height="1.5" fill="#9a9a9a"/></pattern><radialGradient id="sph" cx="0.35" cy="0.35" r="0.7"><stop offset="0" stop-color="#fff"/><stop offset="1" stop-color="#8a8a8a"/></radialGradient></defs>
<rect x="302.7" y="688.7" width="14.6" height="10.6" fill="url(#chk)" stroke="#555" stroke-width="1.4" />
<path d="M329.5,691 l3.5,-3.5 h9 v9.5 l-3.5,3.5 h-9 z" fill="#a9d5fa" stroke="#1e88e5" stroke-width="1.3" />
<rect x="330.2" y="691.5" width="8.6" height="4.5" fill="#5fb0f0" />
<path d="M329.5,691 h9 v9.5 M338.5,691 l3.5,-3.5" fill="none" stroke="#1e88e5" stroke-width="1.1" />
<circle cx="360" cy="692.2" r="3.3" fill="#f6a21e"/>
<path d="M360,685.5 v2 M353.5,692.2 h2 M355.3,687.5 l1.3,1.3 M364.7,687.5 l-1.3,1.3 M355.3,697 l1.3,-1.3" fill="none" stroke="#f6a21e" stroke-width="1.1" />
<circle cx="366.4" cy="694.5" r="3.4" fill="#5bc4cf"/>
<rect x="365.2" y="697.8" width="2.4" height="2.5" fill="#555" />
<circle cx="386.2" cy="691.6" r="5" fill="url(#sph)" stroke="#666" stroke-width="0.9"/>
<ellipse cx="387" cy="699.5" rx="5" ry="1.2" fill="#bbb"/>
<circle cx="392.5" cy="695" r="3.4" fill="#5bc4cf"/>
<rect x="391.3" y="698.3" width="2.4" height="2.5" fill="#555" />
<path d="M410.0,701.6 V690.8 H422.5" fill="none" stroke="#555" stroke-width="1.8" />
<path d="M406.5,697.7 h2.8 M418.5,686 v2.5 M418.5,693 v4.7 h-5" fill="none" stroke="#1e88e5" stroke-width="1.6" />
<path d="M435.5,701.6 V690.8 H448" fill="none" stroke="#555" stroke-width="1.8" />
<path d="M432,697.7 h2.8 M444,686 v2.5 M444,693 v4.7 h-5" fill="none" stroke="#1e88e5" stroke-width="1.6" />
<circle cx="444.2" cy="694.9" r="3.8" fill="#5bc4cf"/>
<rect x="443" y="698.5" width="2.4" height="2.5" fill="#555" />
<circle cx="461.5" cy="695.4" r="2.3" fill="none" stroke="#555" stroke-width="1.2"/><circle cx="467.5" cy="695.4" r="2.3" fill="none" stroke="#555" stroke-width="1.2"/>
<path d="M463.8,694.8 q1,-1.2 1.9,0 M462.3,693.2 l2,-3 q0.8,-0.6 1.1,0.4 v1.5 M468.3,693.2 l2,-3 q0.8,-0.6 1.1,0.4 v1.5" fill="none" stroke="#555" stroke-width="1.1" />
<circle cx="491.7" cy="691.8" r="4" fill="#5bc4cf"/>
<rect x="490.2" y="695.8" width="3" height="3" fill="#555" />
<path d="M512.5,697 V688.5 h7 l2,2 M514.5,690.5 h6 v3" fill="none" stroke="#555" stroke-width="1.1" />
<path d="M517,694 v-2 h2 M522,692 h2 v2 M524,697 v2 h-2 M519,699 h-2 v-2" fill="none" stroke="#444" stroke-width="1.2" />
<path d="M536.5,700 V690 l3,-3 h10 v8 M536.5,690 h10 l3,-3 M540,690 v10 M544,690 v6 M536.5,694 h9" fill="none" stroke="#555" stroke-width="1" />
<path d="M537,697.5 h6 M539.5,695 v5 M542,695 v5" fill="none" stroke="#e02020" stroke-width="1.1" />
<circle cx="548.5" cy="695" r="3.6" fill="#f6b73c"/>
<rect x="547.3" y="698.5" width="2.4" height="2.3" fill="#555" />
<path d="M563,686 v12.5 M575.5,686 v4.5 M563,688.2 h12.5" fill="none" stroke="#555" stroke-width="1.1" />
<line x1="563" y1="696" x2="570" y2="696" stroke="#555" stroke-width="1" stroke-dasharray="1.5,1.2"/>
<circle cx="574" cy="695" r="3.6" fill="#5bc4cf"/>
<rect x="572.8" y="698.5" width="2.4" height="2.3" fill="#555" />
<rect x="583" y="685.5" width="17" height="16.5" fill="#e6e6e6" />
<line x1="599.5" y1="685.5" x2="599.5" y2="702" stroke="#d4d4d4" stroke-width="1" />
<path d="M593,689.5 L589,693.5 L593,697.5" fill="none" stroke="#666" stroke-width="1.3" />
<text x="1.8" y="720.8" font-size="12" fill="#333" font-weight="normal" text-anchor="start" textLength="323" lengthAdjust="spacingAndGlyphs" >Click to select, TAB for alternates, CTRL adds, SHIFT unselects.</text>
<rect x="341" y="709.5" width="6" height="10.5" fill="#5aa8e8" rx="1.5"/>
<rect x="348" y="708" width="6" height="10.5" fill="#e0894a" rx="1.5"/>
<rect x="345" y="713" width="6" height="11" fill="#4cc07a" rx="1.5"/>
<path d="M350.5,722.5 L356,717" fill="none" stroke="#1e88e5" stroke-width="2" />
<circle cx="356.5" cy="717" r="2" fill="#1e88e5"/>
<path d="M561,716.5 l3,3 l3,-3" fill="none" stroke="#c8c8c8" stroke-width="1.4" />
<line x1="572.5" y1="725.5" x2="572.5" y2="728" stroke="#c0c0c0" stroke-width="1" />
<circle cx="584.5" cy="717.5" r="2.3" fill="none" stroke="#999" stroke-width="1.1"/>
<path d="M580.5,722.5 v-1 q0,-2 4,-2 q4,0 4,2 v1 z" fill="none" stroke="#999" stroke-width="1.1" />
<path d="M586.5,708.5 h7.5 v5 h-4 l-2,2 v-2 h-1.5 z" fill="none" stroke="#999" stroke-width="1.1" />
<text x="596" y="722" font-size="12" fill="#9aaab8" font-weight="normal" text-anchor="start" textLength="9" lengthAdjust="spacingAndGlyphs" >:0</text>
<rect x="631.5" y="708.8" width="15" height="14.5" fill="#fff" stroke="#333" stroke-width="1.3" />
<rect x="631.5" y="708.8" width="15" height="2" fill="#333" />
<rect x="633.5" y="713" width="1.5" height="1.5" fill="#333" />
<line x1="636.5" y1="713.8" x2="644.5" y2="713.8" stroke="#333" stroke-width="1.2" />
<rect x="633.5" y="716" width="1.5" height="1.5" fill="#333" />
<line x1="636.5" y1="716.8" x2="644.5" y2="716.8" stroke="#333" stroke-width="1.2" />
<rect x="633.5" y="719" width="1.5" height="1.5" fill="#333" />
<line x1="636.5" y1="719.8" x2="644.5" y2="719.8" stroke="#333" stroke-width="1.2" />
<rect x="658" y="708.5" width="14.5" height="13.5" fill="#f5f5f5" stroke="#999" stroke-width="1.1" />
<rect x="658" y="708.5" width="14.5" height="2" fill="#999" />
<rect x="660" y="712.5" width="1.5" height="1.5" fill="#999" />
<line x1="663" y1="713.3" x2="670.5" y2="713.3" stroke="#999" stroke-width="1.1" />
<rect x="660" y="715.5" width="1.5" height="1.5" fill="#999" />
<line x1="663" y1="716.3" x2="670.5" y2="716.3" stroke="#999" stroke-width="1.1" />
<rect x="660" y="718.5" width="1.5" height="1.5" fill="#999" />
<line x1="663" y1="719.3" x2="670.5" y2="719.3" stroke="#999" stroke-width="1.1" />
<path d="M656,722 h7 l-2,-2 M663,722 l-2,2" fill="none" stroke="#999" stroke-width="1.3" />
<text x="683.9" y="721.8" font-size="12" fill="#a0a0a0" font-weight="normal" text-anchor="start" textLength="63.3" lengthAdjust="spacingAndGlyphs" >Main Model</text>
<path d="M877,717 l3,3 l3,-3" fill="none" stroke="#bbb" stroke-width="1.3" />
<line x1="887.5" y1="725" x2="887.5" y2="728" stroke="#bbb" stroke-width="1" />
<defs><clipPath id="ell"><ellipse cx="695.5" cy="301.5" rx="263.5" ry="253.5"/></clipPath></defs>
<ellipse cx="695.5" cy="301.5" rx="265" ry="254" fill="#ffffff"/>
<ellipse cx="695.5" cy="301.5" rx="263.5" ry="253.5" fill="#f0f0f0"/>
<g clip-path="url(#ell)">
<rect x="552.5" y="94.5" width="137" height="67" fill="#f0f0f0" stroke="#adadad" stroke-width="1" />
<rect x="553.5" y="95.5" width="135" height="65" fill="none" stroke="#e3e3e3" stroke-width="1" />
<rect x="698.5" y="94.5" width="137" height="67" fill="#f0f0f0" stroke="#0078d7" stroke-width="1" />
<rect x="699.5" y="95.5" width="135" height="65" fill="none" stroke="#cce4f7" stroke-width="1" />
<rect x="552.5" y="170.5" width="137" height="67" fill="#f0f0f0" stroke="#adadad" stroke-width="1" />
<rect x="553.5" y="171.5" width="135" height="65" fill="none" stroke="#e3e3e3" stroke-width="1" />
<rect x="698.5" y="170.5" width="137" height="67" fill="#f0f0f0" stroke="#adadad" stroke-width="1" />
<rect x="699.5" y="171.5" width="135" height="65" fill="none" stroke="#e3e3e3" stroke-width="1" />
<text x="557" y="120" font-size="24" fill="#000" font-weight="normal" text-anchor="start" textLength="65.7" lengthAdjust="spacingAndGlyphs" stroke="#000" stroke-width="0.35">SAMPLE</text>
<text x="763.5" y="120" font-size="24" fill="#000" font-weight="normal" text-anchor="start" textLength="65.5" lengthAdjust="spacingAndGlyphs" stroke="#000" stroke-width="0.35">SAMPLE</text>
<text x="557" y="227.7" font-size="24" fill="#000" font-weight="normal" text-anchor="start" textLength="65.7" lengthAdjust="spacingAndGlyphs" stroke="#000" stroke-width="0.35">SAMPLE</text>
<text x="762.7" y="227.7" font-size="24" fill="#000" font-weight="normal" text-anchor="start" textLength="65.7" lengthAdjust="spacingAndGlyphs" stroke="#000" stroke-width="0.35">SAMPLE</text>
<path d="M630,111.5 H653.5 L685.7,156.3" fill="none" stroke="#333" stroke-width="0.9" />
<path d="M685.7,156.3 L680.0,143.8 L675.6,146.9 Z" fill="#000" />
<path d="M757.7,111.5 H734.6 L702.9,155.7" fill="none" stroke="#333" stroke-width="0.9" />
<path d="M702.9,155.7 L713.0,146.3 L708.6,143.2 Z" fill="#000" />
<path d="M630.9,219.5 H654.8 L687,174.5" fill="none" stroke="#333" stroke-width="0.9" />
<path d="M687.0,174.5 L676.9,183.9 L681.3,187.0 Z" fill="#000" />
<path d="M757.7,219.5 H734.3 L701.9,174" fill="none" stroke="#333" stroke-width="0.9" />
<path d="M701.9,174.0 L707.5,186.6 L711.9,183.4 Z" fill="#000" />
<rect x="449.5" y="250.5" width="61" height="36" fill="#e1e1e1" stroke="#adadad" stroke-width="1" />
<rect x="449.5" y="296.5" width="61" height="21" fill="#e1e1e1" stroke="#adadad" stroke-width="1" />
<rect x="449.5" y="327.5" width="61" height="20" fill="#e1e1e1" stroke="#adadad" stroke-width="1" />
<rect x="450" y="358" width="60" height="20" fill="#e1e1e1" stroke="#0078d7" stroke-width="2" />
<text x="460.2" y="265.8" font-size="11.3" fill="#000" font-weight="normal" text-anchor="start" textLength="41" lengthAdjust="spacingAndGlyphs" >Process</text>
<text x="463.5" y="278.7" font-size="11.3" fill="#000" font-weight="normal" text-anchor="start" textLength="33.6" lengthAdjust="spacingAndGlyphs" >Visible</text>
<text x="468.5" y="311" font-size="11.3" fill="#000" font-weight="normal" text-anchor="start" textLength="22.8" lengthAdjust="spacingAndGlyphs" >Help</text>
<text x="458.7" y="340.6" font-size="11.3" fill="#000" font-weight="normal" text-anchor="start" textLength="44.3" lengthAdjust="spacingAndGlyphs" >Minimize</text>
<text x="466.3" y="371.5" font-size="11.3" fill="#000" font-weight="normal" text-anchor="start" textLength="29.5" lengthAdjust="spacingAndGlyphs" >Close</text>
<rect x="540.5" y="264.5" width="12.5" height="12.5" fill="#ffffff" stroke="#333" stroke-width="1" />
<rect x="540.5" y="304.5" width="12.5" height="12.5" fill="#ffffff" stroke="#333" stroke-width="1" />
<rect x="540.5" y="338.0" width="12.5" height="12.5" fill="#ffffff" stroke="#333" stroke-width="1" />
<text x="557.3" y="261.3" font-size="11.3" fill="#000" font-weight="normal" text-anchor="start" textLength="95" lengthAdjust="spacingAndGlyphs" >Attached End Tags</text>
<text x="557.3" y="274.2" font-size="11.3" fill="#000" font-weight="normal" text-anchor="start" textLength="87" lengthAdjust="spacingAndGlyphs" >(Might Modify the</text>
<text x="557.3" y="286.8" font-size="11.3" fill="#000" font-weight="normal" text-anchor="start" textLength="102.5" lengthAdjust="spacingAndGlyphs" >Arrowhead position)</text>
<text x="557.3" y="307.2" font-size="11.3" fill="#000" font-weight="normal" text-anchor="start" textLength="90.5" lengthAdjust="spacingAndGlyphs" >Dynamic Tagging:</text>
<text x="557.3" y="320.2" font-size="11.3" fill="#000" font-weight="normal" text-anchor="start" textLength="125.7" lengthAdjust="spacingAndGlyphs" >Modify New Tag Leaders</text>
<text x="557.3" y="341.2" font-size="11.3" fill="#000" font-weight="normal" text-anchor="start" textLength="135.7" lengthAdjust="spacingAndGlyphs" >Automatic Straight Leaders</text>
<text x="557.3" y="354.2" font-size="11.3" fill="#000" font-weight="normal" text-anchor="start" textLength="62.2" lengthAdjust="spacingAndGlyphs" >(No Elbows)</text>
<text x="723.6" y="260.4" font-size="11.3" fill="#000" font-weight="normal" text-anchor="start" textLength="206" lengthAdjust="spacingAndGlyphs" >Horizontal Justification (TextNotes Only)</text>
<circle cx="727.4" cy="279.5" r="6" fill="#fff" stroke="#333" stroke-width="1"/>
<circle cx="727.4" cy="304" r="6" fill="#fff" stroke="#333" stroke-width="1"/>
<circle cx="727.4" cy="329" r="6" fill="#fff" stroke="#333" stroke-width="1"/>
<circle cx="727.4" cy="351.7" r="6" fill="#fff" stroke="#333" stroke-width="1"/>
<circle cx="727.4" cy="351.7" r="3.3" fill="#1a1a1a"/>
<text x="738.4" y="284" font-size="11.3" fill="#000" font-weight="normal" text-anchor="start" textLength="122" lengthAdjust="spacingAndGlyphs" >Unchanged Justification</text>
<text x="738.4" y="308.1" font-size="11.3" fill="#000" font-weight="normal" text-anchor="start" textLength="81.7" lengthAdjust="spacingAndGlyphs" >Left Justification</text>
<text x="738.4" y="333.1" font-size="11.3" fill="#000" font-weight="normal" text-anchor="start" textLength="90.8" lengthAdjust="spacingAndGlyphs" >Right Justification</text>
<text x="738.4" y="355.8" font-size="11.3" fill="#000" font-weight="normal" text-anchor="start" textLength="114" lengthAdjust="spacingAndGlyphs" >Automatic Justification</text>
<text x="542" y="391" font-size="11.3" fill="#000" font-weight="normal" text-anchor="start" textLength="127.7" lengthAdjust="spacingAndGlyphs" >Angle (Degrees - 0 to 90)</text>
<rect x="693.5" y="377.5" width="58" height="18.5" fill="#ffffff" stroke="#7a7a7a" stroke-width="1" />
<text x="697" y="391" font-size="11.3" fill="#000" font-weight="normal" text-anchor="start" textLength="12" lengthAdjust="spacingAndGlyphs" >45</text>
<rect x="548.5" y="425.5" width="261" height="3" fill="#e7eaea" stroke="#d6d6d6" stroke-width="1" />
<line x1="553.6" y1="411" x2="553.6" y2="415" stroke="#b0b0b0" stroke-width="1" />
<line x1="553.6" y1="439" x2="553.6" y2="443" stroke="#b0b0b0" stroke-width="1" />
<line x1="567.57" y1="411" x2="567.57" y2="415" stroke="#b0b0b0" stroke-width="1" />
<line x1="567.57" y1="439" x2="567.57" y2="443" stroke="#b0b0b0" stroke-width="1" />
<line x1="581.5400000000001" y1="411" x2="581.5400000000001" y2="415" stroke="#b0b0b0" stroke-width="1" />
<line x1="581.5400000000001" y1="439" x2="581.5400000000001" y2="443" stroke="#b0b0b0" stroke-width="1" />
<line x1="595.51" y1="411" x2="595.51" y2="415" stroke="#b0b0b0" stroke-width="1" />
<line x1="595.51" y1="439" x2="595.51" y2="443" stroke="#b0b0b0" stroke-width="1" />
<line x1="609.48" y1="411" x2="609.48" y2="415" stroke="#b0b0b0" stroke-width="1" />
<line x1="609.48" y1="439" x2="609.48" y2="443" stroke="#b0b0b0" stroke-width="1" />
<line x1="623.45" y1="411" x2="623.45" y2="415" stroke="#b0b0b0" stroke-width="1" />
<line x1="623.45" y1="439" x2="623.45" y2="443" stroke="#b0b0b0" stroke-width="1" />
<line x1="637.4200000000001" y1="411" x2="637.4200000000001" y2="415" stroke="#b0b0b0" stroke-width="1" />
<line x1="637.4200000000001" y1="439" x2="637.4200000000001" y2="443" stroke="#b0b0b0" stroke-width="1" />
<line x1="651.39" y1="411" x2="651.39" y2="415" stroke="#b0b0b0" stroke-width="1" />
<line x1="651.39" y1="439" x2="651.39" y2="443" stroke="#b0b0b0" stroke-width="1" />
<line x1="665.36" y1="411" x2="665.36" y2="415" stroke="#b0b0b0" stroke-width="1" />
<line x1="665.36" y1="439" x2="665.36" y2="443" stroke="#b0b0b0" stroke-width="1" />
<line x1="679.33" y1="411" x2="679.33" y2="415" stroke="#b0b0b0" stroke-width="1" />
<line x1="679.33" y1="439" x2="679.33" y2="443" stroke="#b0b0b0" stroke-width="1" />
<line x1="693.3000000000001" y1="411" x2="693.3000000000001" y2="415" stroke="#b0b0b0" stroke-width="1" />
<line x1="693.3000000000001" y1="439" x2="693.3000000000001" y2="443" stroke="#b0b0b0" stroke-width="1" />
<line x1="707.27" y1="411" x2="707.27" y2="415" stroke="#b0b0b0" stroke-width="1" />
<line x1="707.27" y1="439" x2="707.27" y2="443" stroke="#b0b0b0" stroke-width="1" />
<line x1="721.24" y1="411" x2="721.24" y2="415" stroke="#b0b0b0" stroke-width="1" />
<line x1="721.24" y1="439" x2="721.24" y2="443" stroke="#b0b0b0" stroke-width="1" />
<line x1="735.21" y1="411" x2="735.21" y2="415" stroke="#b0b0b0" stroke-width="1" />
<line x1="735.21" y1="439" x2="735.21" y2="443" stroke="#b0b0b0" stroke-width="1" />
<line x1="749.1800000000001" y1="411" x2="749.1800000000001" y2="415" stroke="#b0b0b0" stroke-width="1" />
<line x1="749.1800000000001" y1="439" x2="749.1800000000001" y2="443" stroke="#b0b0b0" stroke-width="1" />
<line x1="763.1500000000001" y1="411" x2="763.1500000000001" y2="415" stroke="#b0b0b0" stroke-width="1" />
<line x1="763.1500000000001" y1="439" x2="763.1500000000001" y2="443" stroke="#b0b0b0" stroke-width="1" />
<line x1="777.12" y1="411" x2="777.12" y2="415" stroke="#b0b0b0" stroke-width="1" />
<line x1="777.12" y1="439" x2="777.12" y2="443" stroke="#b0b0b0" stroke-width="1" />
<line x1="791.09" y1="411" x2="791.09" y2="415" stroke="#b0b0b0" stroke-width="1" />
<line x1="791.09" y1="439" x2="791.09" y2="443" stroke="#b0b0b0" stroke-width="1" />
<line x1="805.0600000000001" y1="411" x2="805.0600000000001" y2="415" stroke="#b0b0b0" stroke-width="1" />
<line x1="805.0600000000001" y1="439" x2="805.0600000000001" y2="443" stroke="#b0b0b0" stroke-width="1" />
<rect x="674" y="416" width="10.5" height="21" fill="#0078d7" />
<text x="542.2" y="468.2" font-size="11.3" fill="#000" font-weight="normal" text-anchor="start" textLength="88.8" lengthAdjust="spacingAndGlyphs" >Landing Distance</text>
<rect x="693.5" y="455" width="48" height="18.5" fill="#ffffff" stroke="#7a7a7a" stroke-width="1" />
<text x="696.2" y="468.5" font-size="11.3" fill="#000" font-weight="normal" text-anchor="start" textLength="23.8" lengthAdjust="spacingAndGlyphs" >1524</text>
<text x="752.5" y="471" font-size="11.3" fill="#000" font-weight="normal" text-anchor="start" textLength="16.8" lengthAdjust="spacingAndGlyphs" >mm</text>
<text x="542.2" y="496" font-size="11.3" fill="#000" font-weight="normal" text-anchor="start" textLength="138.6" lengthAdjust="spacingAndGlyphs" >Elbow-Arrowhead Distance</text>
<rect x="693.5" y="482.5" width="48" height="18.5" fill="#ffffff" stroke="#7a7a7a" stroke-width="1" />
<text x="696.2" y="496" font-size="11.3" fill="#000" font-weight="normal" text-anchor="start" textLength="23.8" lengthAdjust="spacingAndGlyphs" >1524</text>
<text x="752.5" y="496" font-size="11.3" fill="#000" font-weight="normal" text-anchor="start" textLength="16.8" lengthAdjust="spacingAndGlyphs" >mm</text>
<text x="632.5" y="534.5" font-size="14" fill="#000" font-weight="bold" text-anchor="start" textLength="139.3" lengthAdjust="spacingAndGlyphs" >Annotation Dashboard</text>
</g>
<ellipse cx="695.5" cy="301.5" rx="265.5" ry="254.5" fill="none" stroke="#000" stroke-width="2.1" shape-rendering="crispEdges"/>
</svg>
</body></html>
